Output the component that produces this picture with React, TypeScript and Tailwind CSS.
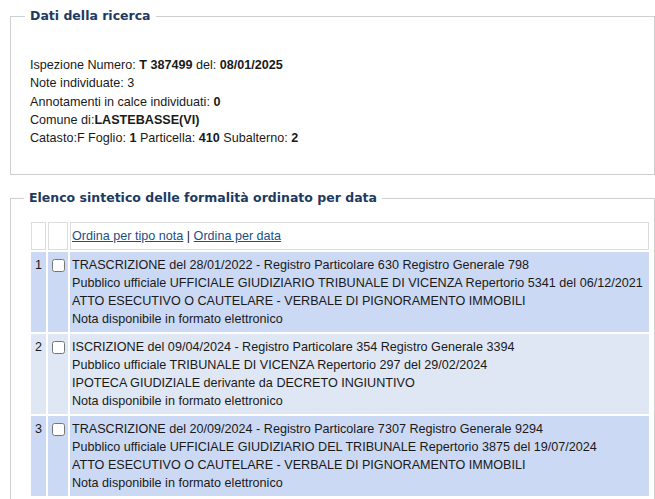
import React from 'react';

interface Nota {
  n: number;
  lines: string[];
  bg: string;
}

const note: Nota[] = [
  {
    n: 1,
    bg: 'bg-[#cbd9f5]',
    lines: [
      'TRASCRIZIONE del 28/01/2022 - Registro Particolare 630 Registro Generale 798',
      'Pubblico ufficiale UFFICIALE GIUDIZIARIO TRIBUNALE DI VICENZA Repertorio 5341 del 06/12/2021',
      'ATTO ESECUTIVO O CAUTELARE - VERBALE DI PIGNORAMENTO IMMOBILI',
      'Nota disponibile in formato elettronico',
    ],
  },
  {
    n: 2,
    bg: 'bg-[#dfe6f4]',
    lines: [
      'ISCRIZIONE del 09/04/2024 - Registro Particolare 354 Registro Generale 3394',
      'Pubblico ufficiale TRIBUNALE DI VICENZA Repertorio 297 del 29/02/2024',
      'IPOTECA GIUDIZIALE derivante da DECRETO INGIUNTIVO',
      'Nota disponibile in formato elettronico',
    ],
  },
  {
    n: 3,
    bg: 'bg-[#cbd9f5]',
    lines: [
      'TRASCRIZIONE del 20/09/2024 - Registro Particolare 7307 Registro Generale 9294',
      'Pubblico ufficiale UFFICIALE GIUDIZIARIO DEL TRIBUNALE Repertorio 3875 del 19/07/2024',
      'ATTO ESECUTIVO O CAUTELARE - VERBALE DI PIGNORAMENTO IMMOBILI',
      'Nota disponibile in formato elettronico',
    ],
  },
];

const legendCls =
  "-ml-[5px] px-[5px] text-[12.5px] leading-[16px] font-bold text-[#1d3a62] font-['DejaVu_Sans',Verdana,sans-serif]";

export default function App() {
  return (
    <div className="w-[655px] h-[499px] overflow-hidden bg-white text-[12.6px] text-[#1a1a1a] font-['Liberation_Sans',Arial,sans-serif]">
      <fieldset className="ml-[10px] mt-[8px] w-[645px] border border-[#cfcfcf] pl-[19px] pr-2 pt-[32px] pb-[27px]">
        <legend className={legendCls}>Dati della ricerca</legend>
        <div className="leading-[18.3px]">
          <div>
            Ispezione Numero: <b>T 387499</b> del: <b>08/01/2025</b>
          </div>
          <div>Note individuate: 3</div>
          <div>
            Annotamenti in calce individuati: <b>0</b>
          </div>
          <div>
            Comune di:<b>LASTEBASSE(VI)</b>
          </div>
          <div>
            Catasto:F Foglio: <b>1</b> Particella: <b>410</b> Subalterno: <b>2</b>
          </div>
        </div>
      </fieldset>

      <fieldset className="ml-[10px] mt-[15px] w-[645px] border border-[#cfcfcf] pl-[18px] pr-[3px] pt-[14px] pb-4">
        <legend className={legendCls}>Elenco sintetico delle formalità ordinato per data</legend>
        <table className="w-[622px] border-separate border-spacing-[2px]">
          <tbody>
            <tr>
              <td className="w-[15px] border border-[#dcdcdc] bg-white" />
              <td className="w-[20px] border border-[#dcdcdc] bg-white" />
              <td className="border border-[#dcdcdc] bg-white px-[1px] py-[5px] leading-[16px]">
                <a href="#" className="underline text-[#1c4f86]">Ordina per tipo nota</a>
                {' | '}
                <a href="#" className="underline text-[#1c4f86]">Ordina per data</a>
              </td>
            </tr>
            {note.map(r => (
              <tr key={r.n}>
                <td className={`${r.bg} align-top text-center py-[4px] leading-[18px]`}>{r.n}</td>
                <td className={`${r.bg} align-top text-center pt-[7px]`}>
                  <input type="checkbox" className="m-0 w-[13px] h-[13px] align-top" />
                </td>
                <td className={`${r.bg} align-top px-[2px] py-[4px] leading-[18px]`}>
                  {r.lines.map((l, i) => (
                    <div key={i} className="whitespace-nowrap">{l}</div>
                  ))}
                </td>
              </tr>
            ))}
          </tbody>
        </table>
      </fieldset>
    </div>
  );
}
